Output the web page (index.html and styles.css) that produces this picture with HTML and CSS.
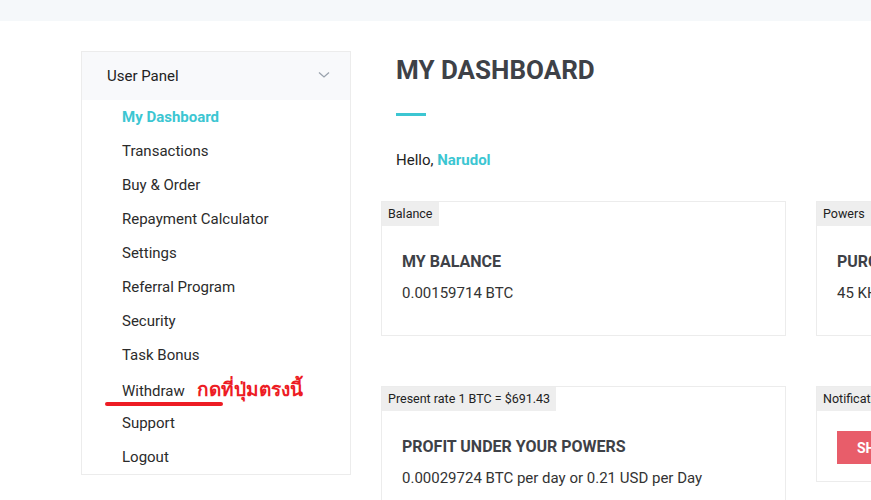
FILE: index.html
```html
<!DOCTYPE html>
<html lang="en">
<head>
    <meta charset="UTF-8">
    <title>My Dashboard</title>
    <link rel="stylesheet" href="styles.css">
</head>
<body>

    <div class="topbar"></div>

    <div class="page">
        <aside class="sidebar">
            <div class="panel-head">
                <span>User Panel</span>
                <svg class="chevron" width="12" height="8" viewBox="0 0 12 8"><path d="M1 1.5 L6 6 L11 1.5" fill="none" stroke="#9aa3ad" stroke-width="1.3"/></svg>
            </div>
            <ul class="menu">
                <li class="active">My Dashboard</li>
                <li>Transactions</li>
                <li>Buy &amp; Order</li>
                <li>Repayment Calculator</li>
                <li>Settings</li>
                <li>Referral Program</li>
                <li>Security</li>
                <li>Task Bonus</li>
                <li class="marked">Withdraw <span class="note">กดที่ปุ่มตรงนี้</span></li>
                <li>Support</li>
                <li>Logout</li>
            </ul>
        </aside>

        <main class="content">
            <div class="heading">
                <h1>MY DASHBOARD</h1>
                <div class="bar"></div>
                <p class="hello">Hello, <strong>Narudol</strong></p>
            </div>

            <div class="cards">
                <div class="card">
                    <span class="tag">Balance</span>
                    <div class="card-body">
                        <h3>MY BALANCE</h3>
                        <p>0.00159714 BTC</p>
                    </div>
                </div>
                <div class="card">
                    <span class="tag">Powers</span>
                    <div class="card-body">
                        <h3>PURCHASED POWERS</h3>
                        <p>45 KH/s</p>
                    </div>
                </div>
                <div class="card tall">
                    <span class="tag">Present rate 1 BTC = $691.43</span>
                    <div class="card-body">
                        <h3>PROFIT UNDER YOUR POWERS</h3>
                        <p>0.00029724 BTC per day or 0.21 USD per Day</p>
                    </div>
                </div>
                <div class="card short">
                    <span class="tag">Notifications</span>
                    <div class="card-body">
                        <button class="show">SHOW</button>
                    </div>
                </div>
            </div>
        </main>
    </div>

</body>
</html>
```

FILE: styles.css
```css
:root {
    --teal: #3cc6d2;
    --text: #222;
    --title: #3e4147;
    --line: #ececec;
}

body {
    margin: 0;
    overflow: hidden;
    font-family: Roboto, "Noto Sans", sans-serif;
    color: var(--text);
    background: #fff;
    width: 871px;
    height: 500px;
}

.topbar {
    height: 21px;
    background: #f5f8fa;
}

.page {
    display: flex;
    gap: 30px;
    padding: 30px 0 0 81px;
    width: 1300px;
}

.sidebar {
    width: 268px;
    height: 422px;
    border: 1px solid var(--line);
    flex-shrink: 0;
}

.panel-head {
    height: 48px;
    background: #f8f9fb;
    display: flex;
    align-items: center;
    justify-content: space-between;
    padding: 0 20px 0 25px;
    font-size: 15px;
}

.chevron {
    margin-bottom: 2px;
}

.menu {
    list-style: none;
    margin: 0;
    padding: 0 0 0 40px;
}

.menu li {
    height: 34px;
    line-height: 34px;
    font-size: 15px;
    color: #2b2b2b;
    position: relative;
}

.menu li.active {
    color: var(--teal);
    font-weight: bold;
}

.menu li.marked::after {
    content: "";
    position: absolute;
    left: -17px;
    top: 30px;
    width: 118px;
    height: 4px;
    border-radius: 2px;
    background: #ed1c24;
}

.note {
    color: #ed1c24;
    font-weight: bold;
    font-size: 19px;
    margin-left: 8px;
    font-family: "Noto Sans", "DejaVu Sans", sans-serif;
}

.content {
    width: 840px;
    flex-shrink: 0;
}

.heading {
    padding: 0 15px;
}

h1 {
    margin: 0;
    padding-top: 2px;
    font-size: 26px;
    line-height: 34px;
    color: var(--title);
}

.bar {
    width: 30px;
    height: 3px;
    background: var(--teal);
    margin-top: 26px;
}

.hello {
    margin: 34px 0 0;
    font-size: 15px;
    line-height: 20px;
}

.hello strong {
    color: var(--teal);
}

.cards {
    margin-top: 31px;
    display: grid;
    grid-template-columns: 405px 405px;
    column-gap: 30px;
    row-gap: 50px;
    align-items: start;
}

.card {
    border: 1px solid var(--line);
    height: 133px;
    position: relative;
}

.card.tall {
    height: 200px;
}

.card.short {
    height: 94px;
}

.tag {
    display: inline-block;
    background: #eee;
    font-size: 12.5px;
    line-height: 24px;
    padding: 0 6px;
}

.card-body {
    padding: 25px 20px 0;
}

h3 {
    margin: 0;
    font-size: 16px;
    line-height: 22px;
    color: var(--title);
}

.card-body p {
    margin: 11px 0 0;
    font-size: 15px;
    color: #333;
}

.show {
    margin-top: -5px;
    background: #e85d6a;
    color: #fff;
    border: none;
    font-family: Roboto, sans-serif;
    font-weight: bold;
    font-size: 14px;
    height: 33px;
    padding: 0 20px;
}
```
